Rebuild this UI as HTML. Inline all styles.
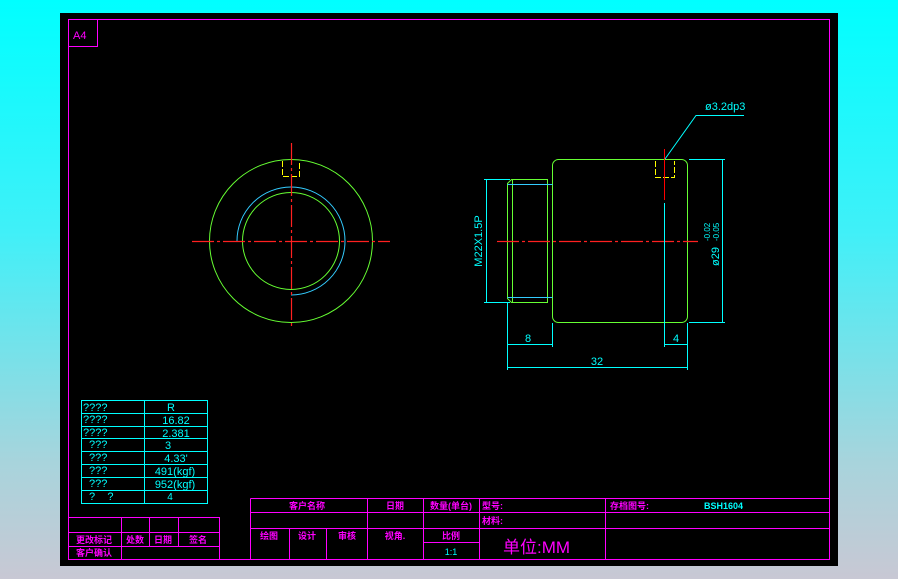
<!DOCTYPE html>
<html><head><meta charset="utf-8"><style>
html,body{margin:0;padding:0;width:898px;height:579px;overflow:hidden;background:linear-gradient(#00ffff 0%,#40f0f8 40%,#a8d4dc 80%,#c8c8d4 100%);}
svg{position:absolute;left:0;top:0;}
text{font-family:"Liberation Sans","Noto Sans CJK SC",sans-serif;}
</style></head><body>
<svg width="898" height="579" viewBox="0 0 898 579">
<rect x="60" y="13" width="778" height="553" fill="#000"/>
<g fill="none" stroke="#ff00ff" stroke-width="1">
<rect x="68.5" y="19.5" width="761" height="540"/>
<path d="M68.5 46.5H97.5V19.5"/>
<path d="M250.5 498.5H829.5M250.5 512.5H829.5M250.5 528.5H829.5M423.5 542.5H479.5M250.5 498.5V559.5"/>
<path d="M367.5 498.5V559.5M423.5 498.5V559.5M479.5 498.5V559.5M605.5 498.5V559.5M289.5 528.5V559.5M326.5 528.5V559.5"/>
<path d="M68.5 517.5H219.5V559.5M68.5 532.5H219.5M68.5 546.5H219.5M121.5 517.5V559.5M149.5 517.5V546.5M178.5 517.5V546.5"/>
</g>
<text x="73" y="39" fill="#ff00ff" font-size="11">A4</text>
<g font-size="9" font-weight="bold" fill="#ff00ff">
<text x="307" y="509" text-anchor="middle">客户名称</text>
<text x="395" y="509" text-anchor="middle">日期</text>
<text x="451" y="509" text-anchor="middle">数量(单台)</text>
<text x="482" y="509">型号:</text>
<text x="610" y="509">存档图号:</text>
<text x="482" y="524">材料:</text>
<text x="269" y="539" text-anchor="middle">绘图</text>
<text x="307" y="539" text-anchor="middle">设计</text>
<text x="347" y="539" text-anchor="middle">审核</text>
<text x="395" y="539" text-anchor="middle">视角.</text>
<text x="451" y="539" text-anchor="middle">比例</text>
<text x="94" y="543" text-anchor="middle">更改标记</text>
<text x="135" y="543" text-anchor="middle">处数</text>
<text x="163" y="543" text-anchor="middle">日期</text>
<text x="198" y="543" text-anchor="middle">签名</text>
<text x="94" y="556" text-anchor="middle">客户确认</text>
</g>
<text x="503" y="553" fill="#ff00ff" font-size="17">单位:MM</text>
<text x="704" y="509" fill="#00ffff" font-size="9" font-weight="bold">BSH1604</text>
<text x="451" y="555" fill="#00ffff" font-size="9" text-anchor="middle">1:1</text>
<g fill="none" stroke="#00ffff" stroke-width="1">
<rect x="81.5" y="400.5" width="126" height="103"/>
<path d="M144.5 400.5V503.5M81.5 413.5H207.5M81.5 426.5H207.5M81.5 438.5H207.5M81.5 451.5H207.5M81.5 464.5H207.5M81.5 477.5H207.5M81.5 490.5H207.5"/>
</g>
<g fill="#00ffff" font-size="11">
<text x="83" y="411">????</text><text x="83" y="423">????</text><text x="83" y="436">????</text>
<text x="89" y="448">???</text><text x="89" y="461">???</text><text x="89" y="474">???</text><text x="89" y="487">???</text><text x="89" y="500">?&#160;&#160;&#160;&#160;?</text>
<g text-anchor="middle"><text x="171" y="411">R</text><text x="176" y="424">16.82</text><text x="176" y="437">2.381</text><text x="168" y="449">3</text><text x="176" y="462">4.33'</text><text x="175" y="475">491(kgf)</text><text x="175" y="488">952(kgf)</text><text x="170" y="500" font-size="10">4</text></g>
</g>
<g fill="none" stroke="#66ff33" stroke-width="1">
<circle cx="291" cy="241" r="81.5"/>
<circle cx="291" cy="241" r="48.5"/>
</g>
<path d="M237 241A54 54 0 1 1 291 295" fill="none" stroke="#33ccff" stroke-width="1"/>
<path d="M282.5 161V176.5H299.5V161" fill="none" stroke="#ffff00" stroke-dasharray="6 2"/>
<g stroke="#ff2020" stroke-width="1.2" stroke-dasharray="22 3 3 3">
<path d="M192 241.5H390M291.5 143V327"/>
</g>
<g fill="none" stroke="#66ff33" stroke-width="1">
<rect x="552.5" y="159.5" width="135" height="163" rx="6"/>
<path d="M511.5 179.5H547.5V302.5H511.5L507.5 298.5V183.5Z M512.5 180V302"/>
</g>
<path d="M507.5 184.5H552.5M507.5 297.5H552.5" stroke="#33ccff" fill="none"/>
<path d="M655.5 161V177.5H674.5V161" fill="none" stroke="#ffff00" stroke-dasharray="6 2"/>
<path d="M497 241.5H698" stroke="#ff2020" stroke-width="1.2" stroke-dasharray="22 3 3 3"/>
<path d="M664.5 149V200" stroke="#ff0000"/>
<g fill="none" stroke="#00ffff" stroke-width="1">
<path d="M664.5 203V347M665 159L696 115.5H744"/>
<path d="M484 179.5H510M484 302.5H510M486.5 179V303"/>
<path d="M689 159.5H725M689 322.5H725M722.5 159V323"/>
<path d="M507.5 303V370M552.5 323V347M687.5 323V370M507 344.5H553M664 344.5H688M507 367.5H688"/>
</g>
<g fill="#00ffff" font-size="11">
<text x="705" y="110">ø3.2dp3</text>
<text x="528" y="342" text-anchor="middle">8</text>
<text x="676" y="342" text-anchor="middle">4</text>
<text x="597" y="365" text-anchor="middle">32</text>
<text transform="translate(482,241) rotate(-90)" text-anchor="middle">M22X1.5P</text>
<text transform="translate(719,266) rotate(-90)">ø29</text>
<text transform="translate(710,241) rotate(-90)" font-size="8">-0.02</text>
<text transform="translate(719,241) rotate(-90)" font-size="8">-0.05</text>
</g>
</svg>
</body></html>
